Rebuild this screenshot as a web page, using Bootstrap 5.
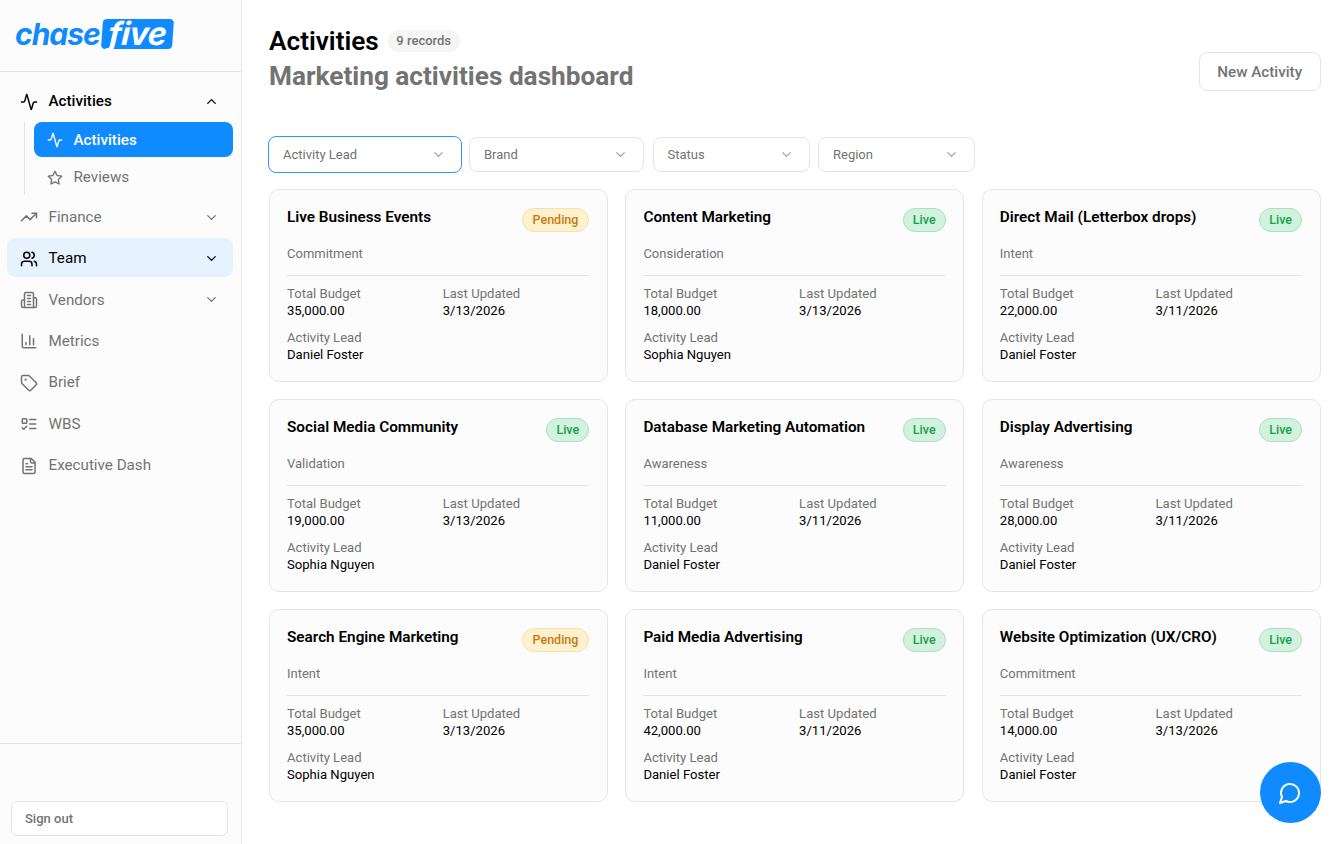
<!DOCTYPE html>
<html lang="en">
<head>
    <meta charset="UTF-8">
    <meta name="viewport" content="width=device-width, initial-scale=1.0">
    <title>Activities</title>
    <link href="https://cdn.jsdelivr.net/npm/bootstrap@5.3.2/dist/css/bootstrap.min.css" rel="stylesheet">
    <style>
        body {
            font-family: Roboto, "Liberation Sans", sans-serif;
            background: #fff;
            color: #000;
            height: 100vh;
            overflow: hidden;
        }

        svg.ico {
            fill: none;
            stroke: currentColor;
            stroke-width: 2;
            stroke-linecap: round;
            stroke-linejoin: round;
            flex-shrink: 0;
        }

        /* Sidebar */
        .side-panel {
            width: 242px;
            height: 100vh;
            background: #fcfcfc;
            border-right: 1px solid #e5e5e5;
            flex-shrink: 0;
        }
        .brand-area {
            height: 72px;
            padding: 19px 0 0 15px;
            border-bottom: 1px solid #e5e5e5;
        }
        .brand-chase {
            font-family: Inter, sans-serif;
            font-weight: 700;
            font-style: italic;
            font-size: 30px;
            line-height: 30px;
            color: #0f8bff;
            letter-spacing: -1px;
        }
        .brand-five {
            font-family: Inter, sans-serif;
            font-weight: 700;
            font-style: italic;
            font-size: 32px;
            line-height: 29px;
            height: 30px;
            width: 71px;
            margin-left: 2px;
            background: #0f8bff;
            color: #fff;
            border-radius: 4px;
            transform: skewX(-4deg);
            text-align: center;
            letter-spacing: -.4px;
        }
        .side-nav {
            padding: 9.7px 8px 0 7px;
            gap: 2.4px;
        }
        .side-item {
            height: 39px;
            padding: 1.2px 14px 0 13px;
            border-radius: 8px;
            color: #737373;
            font-size: 15.2px;
            gap: 10.5px;
        }
        .side-item.is-open {
            color: #000;
            font-weight: 500;
        }
        .side-item.is-hover {
            background: #e6f3ff;
            color: #000;
        }
        .side-item .chev {
            margin-left: auto;
        }
        .sub-nav {
            margin: 1.5px 0 0 17px;
            padding-left: 9px;
            border-left: 1px solid #e5e5e5;
            gap: 2.5px;
        }
        .sub-item {
            height: 35px;
            padding: .8px 13px 0;
            border-radius: 8px;
            color: #737373;
            font-size: 15.2px;
            gap: 10.5px;
        }
        .sub-item.is-active {
            background: #0f8bff;
            color: #fff;
            font-weight: 500;
        }
        .side-foot {
            height: 101px;
            border-top: 1px solid #e5e5e5;
            padding: 57px 13px 0 11px;
        }
        .signout-btn {
            width: 100%;
            height: 35px;
            background: #fff;
            border: 1px solid #e5e5e5;
            border-radius: 6px;
            font-size: 13px;
            font-weight: 500;
            color: #737373;
            text-align: left;
            padding: 1px 13px 0;
        }

        /* Main */
        .main-area {
            padding: 24px 22.3px 0 27px;
            min-width: 0;
        }
        .page-title {
            font-size: 26.2px;
            font-weight: 600;
            line-height: 34px;
            margin: 0;
        }
        .page-sub {
            font-size: 26.2px;
            font-weight: 700;
            line-height: 36px;
            color: #737373;
            margin: 0;
        }
        .count-pill {
            background: #f5f5f5;
            color: #737373;
            font-size: 13px;
            font-weight: 500;
            line-height: 22px;
            padding: 0 8.5px;
            border-radius: 11px;
            margin-left: 9px;
        }
        .new-btn {
            height: 39px;
            width: 122px;
            margin-top: 28px;
            background: #fff;
            border: 1px solid #e5e5e5;
            border-radius: 8px;
            font-size: 15.2px;
            font-weight: 500;
            color: #737373;
            padding: 1px 0 0;
        }
        .filter-row {
            margin-top: 43px;
            gap: 8.5px;
        }
        .filter-box {
            height: 35px;
            border: 1px solid #e5e5e5;
            border-radius: 8px;
            background: #fff;
            color: #737373;
            font-size: 13px;
            padding: 0 15px 0 14px;
        }
        .filter-box.is-focus {
            border-color: #2b97ff;
            height: 37px;
            margin: -1px -1.5px -1px -1px;
        }
        .filter-box svg {
            color: #a3a3a3;
        }
        .cards-wrap {
            display: grid;
            grid-template-columns: repeat(3, 1fr);
            gap: 17.6px 17.5px;
            margin-top: 17.3px;
        }
        .act-card {
            height: 192.4px;
            padding: 17px 17.5px 0 17px;
            background: #fcfcfc;
            border: 1px solid #e5e5e5;
            border-radius: 10px;
        }
        .act-title {
            font-size: 15.3px;
            font-weight: 600;
            line-height: 20px;
            margin: 0;
        }
        .act-head {
            height: 25px;
        }
        .status-tag {
            font-size: 12.5px;
            font-weight: 500;
            line-height: 22px;
            height: 24px;
            padding: 0 10px;
            border-radius: 12px;
            border: 1px solid;
            margin-top: 1px;
        }
        .status-pending {
            background: #fdf1d0;
            border-color: #fbe09f;
            color: #c97a0e;
        }
        .status-live {
            padding: 0 9.2px;
            background: #d2f1de;
            border-color: #a5e3bc;
            color: #16a34a;
        }
        .act-stage {
            font-size: 13px;
            color: #737373;
            line-height: 18px;
            margin-top: 13px;
            padding-bottom: 12px;
            border-bottom: 1px solid #e5e5e5;
        }
        .act-facts {
            display: grid;
            grid-template-columns: 1fr 1fr;
            column-gap: 9px;
            row-gap: 9.1px;
            margin-top: 8.5px;
            font-size: 13.1px;
            line-height: 17.5px;
        }
        .fact-label {
            color: #737373;
        }
        .chat-fab {
            position: absolute;
            left: 1260px;
            top: 762px;
            width: 61px;
            height: 61px;
            padding: 0 2px 0 0;
            border-radius: 50%;
            background: #0f8bff;
            color: #fff;
            border: 0;
        }
    </style>
</head>
<body>
    <div class="d-flex">
        <!-- Sidebar -->
        <aside class="side-panel d-flex flex-column">
            <div class="brand-area">
                <div class="d-flex align-items-start">
                    <span class="brand-chase">chase</span>
                    <span class="brand-five">five</span>
                </div>
            </div>
            <nav class="side-nav d-flex flex-column flex-grow-1">
                <div>
                    <div class="side-item is-open d-flex align-items-center">
                        <svg class="ico" width="18" height="18" viewBox="0 0 24 24"><path d="M22 12h-2.48a2 2 0 0 0-1.93 1.46l-2.35 8.36a.25.25 0 0 1-.48 0L9.24 2.18a.25.25 0 0 0-.48 0l-2.35 8.36A2 2 0 0 1 4.49 12H2"/></svg>
                        <span>Activities</span>
                        <svg class="ico chev" width="15" height="15" viewBox="0 0 24 24"><path d="m18 15-6-6-6 6"/></svg>
                    </div>
                    <div class="sub-nav d-flex flex-column">
                        <div class="sub-item is-active d-flex align-items-center">
                            <svg class="ico" width="16" height="16" viewBox="0 0 24 24"><path d="M22 12h-2.48a2 2 0 0 0-1.93 1.46l-2.35 8.36a.25.25 0 0 1-.48 0L9.24 2.18a.25.25 0 0 0-.48 0l-2.35 8.36A2 2 0 0 1 4.49 12H2"/></svg>
                            <span>Activities</span>
                        </div>
                        <div class="sub-item d-flex align-items-center">
                            <svg class="ico" width="16" height="16" viewBox="0 0 24 24"><polygon points="12 2 15.09 8.26 22 9.27 17 14.14 18.18 21.02 12 17.77 5.82 21.02 7 14.14 2 9.27 8.91 8.26 12 2"/></svg>
                            <span>Reviews</span>
                        </div>
                    </div>
                </div>
                <div class="side-item d-flex align-items-center">
                    <svg class="ico" width="18" height="18" viewBox="0 0 24 24"><polyline points="22 7 13.5 15.5 8.5 10.5 2 17"/><polyline points="16 7 22 7 22 13"/></svg>
                    <span>Finance</span>
                    <svg class="ico chev" width="15" height="15" viewBox="0 0 24 24"><path d="m6 9 6 6 6-6"/></svg>
                </div>
                <div class="side-item is-hover d-flex align-items-center">
                    <svg class="ico" width="18" height="18" viewBox="0 0 24 24"><path d="M16 21v-2a4 4 0 0 0-4-4H6a4 4 0 0 0-4 4v2"/><circle cx="9" cy="7" r="4"/><path d="M22 21v-2a4 4 0 0 0-3-3.87"/><path d="M16 3.13a4 4 0 0 1 0 7.75"/></svg>
                    <span>Team</span>
                    <svg class="ico chev" width="15" height="15" viewBox="0 0 24 24"><path d="m6 9 6 6 6-6"/></svg>
                </div>
                <div class="side-item d-flex align-items-center">
                    <svg class="ico" width="18" height="18" viewBox="0 0 24 24"><path d="M6 22V4a2 2 0 0 1 2-2h8a2 2 0 0 1 2 2v18Z"/><path d="M6 12H4a2 2 0 0 0-2 2v6a2 2 0 0 0 2 2h2"/><path d="M18 9h2a2 2 0 0 1 2 2v9a2 2 0 0 1-2 2h-2"/><path d="M10 6h4"/><path d="M10 10h4"/><path d="M10 14h4"/><path d="M10 18h4"/></svg>
                    <span>Vendors</span>
                    <svg class="ico chev" width="15" height="15" viewBox="0 0 24 24"><path d="m6 9 6 6 6-6"/></svg>
                </div>
                <div class="side-item d-flex align-items-center">
                    <svg class="ico" width="18" height="18" viewBox="0 0 24 24"><path d="M3 3v16a2 2 0 0 0 2 2h16"/><path d="M18 17V9"/><path d="M13 17V5"/><path d="M8 17v-3"/></svg>
                    <span>Metrics</span>
                </div>
                <div class="side-item d-flex align-items-center">
                    <svg class="ico" width="18" height="18" viewBox="0 0 24 24"><path d="M12.586 2.586A2 2 0 0 0 11.172 2H4a2 2 0 0 0-2 2v7.172a2 2 0 0 0 .586 1.414l8.704 8.704a2.426 2.426 0 0 0 3.42 0l6.58-6.58a2.426 2.426 0 0 0 0-3.42z"/><circle cx="7.5" cy="7.5" r=".5" fill="currentColor"/></svg>
                    <span>Brief</span>
                </div>
                <div class="side-item d-flex align-items-center">
                    <svg class="ico" width="18" height="18" viewBox="0 0 24 24"><rect x="3" y="5" width="6" height="6" rx="1"/><path d="m3 17 2 2 4-4"/><path d="M13 6h8"/><path d="M13 12h8"/><path d="M13 18h8"/></svg>
                    <span>WBS</span>
                </div>
                <div class="side-item d-flex align-items-center">
                    <svg class="ico" width="18" height="18" viewBox="0 0 24 24"><path d="M15 2H6a2 2 0 0 0-2 2v16a2 2 0 0 0 2 2h12a2 2 0 0 0 2-2V7Z"/><path d="M14 2v4a2 2 0 0 0 2 2h4"/><path d="M10 9H8"/><path d="M16 13H8"/><path d="M16 17H8"/></svg>
                    <span>Executive Dash</span>
                </div>
            </nav>
            <div class="side-foot">
                <button class="signout-btn" type="button">Sign out</button>
            </div>
        </aside>

        <!-- Main content -->
        <main class="main-area flex-grow-1">
            <div class="d-flex justify-content-between align-items-start">
                <div>
                    <div class="d-flex align-items-center">
                        <h1 class="page-title">Activities</h1>
                        <span class="count-pill">9 records</span>
                    </div>
                    <h2 class="page-sub">Marketing activities dashboard</h2>
                </div>
                <button class="new-btn" type="button">New Activity</button>
            </div>

            <div class="filter-row d-flex">
                <div class="filter-box is-focus d-flex align-items-center justify-content-between" style="width:194px"><span>Activity Lead</span><svg class="ico" width="15" height="15" viewBox="0 0 24 24"><path d="m6 9 6 6 6-6"/></svg></div>
                <div class="filter-box d-flex align-items-center justify-content-between" style="width:175px"><span>Brand</span><svg class="ico" width="15" height="15" viewBox="0 0 24 24"><path d="m6 9 6 6 6-6"/></svg></div>
                <div class="filter-box d-flex align-items-center justify-content-between" style="width:157px"><span>Status</span><svg class="ico" width="15" height="15" viewBox="0 0 24 24"><path d="m6 9 6 6 6-6"/></svg></div>
                <div class="filter-box d-flex align-items-center justify-content-between" style="width:157px"><span>Region</span><svg class="ico" width="15" height="15" viewBox="0 0 24 24"><path d="m6 9 6 6 6-6"/></svg></div>
            </div>

            <div class="cards-wrap" id="cards"></div>
        </main>
    </div>

    <button class="chat-fab d-flex align-items-center justify-content-center" type="button" aria-label="Chat">
        <svg class="ico" width="24" height="24" viewBox="0 0 24 24"><path d="M7.9 20A9 9 0 1 0 4 16.1L2 22Z"/></svg>
    </button>

    <script src="https://cdn.jsdelivr.net/npm/bootstrap@5.3.2/dist/js/bootstrap.bundle.min.js"></script>
    <script>
        // Activity records
        const activities = [
            ['Live Business Events', 'Pending', 'Commitment', '35,000.00', '3/13/2026', 'Daniel Foster'],
            ['Content Marketing', 'Live', 'Consideration', '18,000.00', '3/13/2026', 'Sophia Nguyen'],
            ['Direct Mail (Letterbox drops)', 'Live', 'Intent', '22,000.00', '3/11/2026', 'Daniel Foster'],
            ['Social Media Community', 'Live', 'Validation', '19,000.00', '3/13/2026', 'Sophia Nguyen'],
            ['Database Marketing Automation', 'Live', 'Awareness', '11,000.00', '3/11/2026', 'Daniel Foster'],
            ['Display Advertising', 'Live', 'Awareness', '28,000.00', '3/11/2026', 'Daniel Foster'],
            ['Search Engine Marketing', 'Pending', 'Intent', '35,000.00', '3/13/2026', 'Sophia Nguyen'],
            ['Paid Media Advertising', 'Live', 'Intent', '42,000.00', '3/11/2026', 'Daniel Foster'],
            ['Website Optimization (UX/CRO)', 'Live', 'Commitment', '14,000.00', '3/13/2026', 'Daniel Foster']
        ];

        document.getElementById('cards').innerHTML = activities.map(a => `
            <div class="card act-card">
                <div class="act-head d-flex justify-content-between align-items-start">
                    <h3 class="act-title">${a[0]}</h3>
                    <span class="status-tag status-${a[1].toLowerCase()}">${a[1]}</span>
                </div>
                <div class="act-stage">${a[2]}</div>
                <div class="act-facts">
                    <div><div class="fact-label">Total Budget</div><div>${a[3]}</div></div>
                    <div><div class="fact-label">Last Updated</div><div>${a[4]}</div></div>
                    <div><div class="fact-label">Activity Lead</div><div>${a[5]}</div></div>
                </div>
            </div>`).join('');
    </script>
</body>
</html>
